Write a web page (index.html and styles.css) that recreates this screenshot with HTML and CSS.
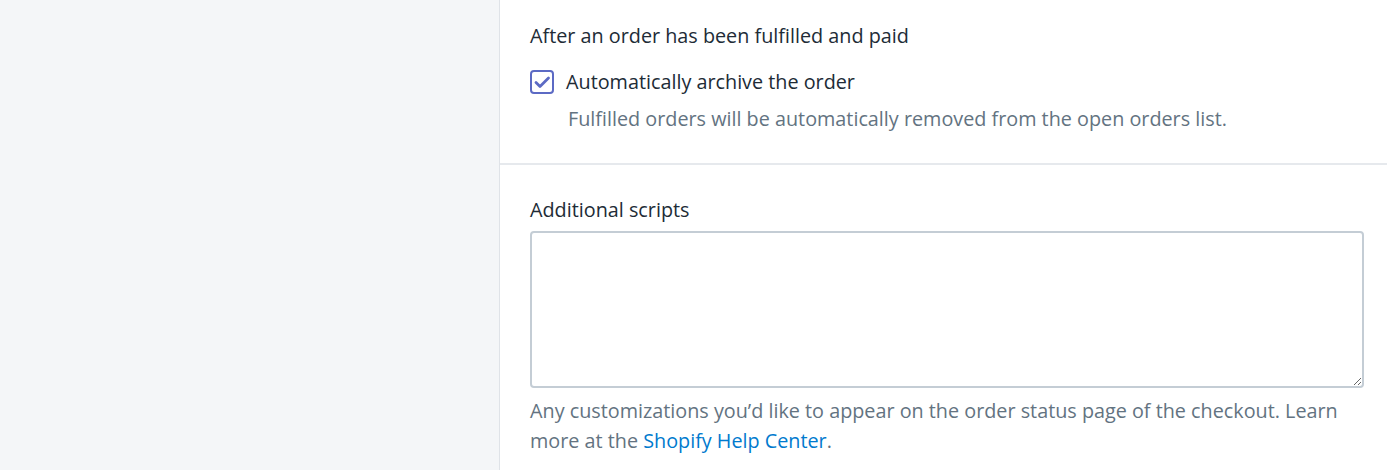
FILE: index.html
```html
<!DOCTYPE html>
<html lang="en">
<head>
<meta charset="utf-8">
<title>Order processing</title>
<link rel="stylesheet" href="styles.css">
</head>
<body>
<div class="page">
  <aside class="side"></aside>
  <main class="card">
    <section class="section first">
      <p class="heading">After an order has been fulfilled and paid</p>
      <label class="check-row">
        <span class="checkbox">
          <svg viewBox="0 0 20 20" width="20" height="20" aria-hidden="true"><path d="M4 10.5l4 4 8.5-8.5" fill="none" stroke="#5c6ac4" stroke-width="2.8" stroke-linecap="round" stroke-linejoin="round"/></svg>
        </span>
        <span class="check-label">Automatically archive the order</span>
      </label>
      <p class="check-help">Fulfilled orders will be automatically removed from the open orders list.</p>
    </section>
    <section class="section second">
      <label class="field-label" for="scripts">Additional scripts</label>
      <textarea id="scripts" class="textarea"></textarea>
      <p class="help">Any customizations you’d like to appear on the order status page of the checkout. Learn more at the <a href="#" class="link">Shopify Help Center</a>.</p>
    </section>
  </main>
</div>
</body>
</html>
```

FILE: styles.css
```css
* { box-sizing: border-box; }
html, body { margin: 0; padding: 0; }
body {
  font-family: "Open Sans", "Noto Sans", "Liberation Sans", sans-serif;
  font-size: 19.8px;
  line-height: 30px;
  color: #212b36;
  background: #ffffff;
}
.page {
  display: flex;
  height: 470px;
  overflow: hidden;
}
.side {
  width: 500px;
  flex: none;
  background: #f4f6f8;
  border-right: 1px solid #dfe3e8;
}
.card {
  flex: 1;
  background: #fff;
}
.section {
  padding: 0 23px 0 30px;
}
.first {
  padding-top: 21px;
  padding-bottom: 29px;
  border-bottom: 2px solid #e6e9ed;
}
.second {
  padding-top: 30px;
}
p { margin: 0; }
.heading { margin-bottom: 16px; }
.check-row {
  display: flex;
  align-items: center;
  gap: 12px;
  height: 30px;
}
.checkbox {
  width: 24px;
  height: 24px;
  border: 2px solid #5c6ac4;
  border-radius: 4px;
  display: flex;
  align-items: center;
  justify-content: center;
  flex: none;
}
.check-help {
  margin-top: 7px;
  margin-left: 38px;
  color: #637381;
}
.field-label {
  display: block;
  margin-bottom: 6px;
}
.textarea {
  display: block;
  width: 100%;
  height: 157px;
  border: 2px solid #c4cdd5;
  border-radius: 4px;
  background: #fff;
  font: inherit;
  resize: vertical;
  padding: 6px 10px;
}
.help {
  margin-top: 8px;
  color: #637381;
}
.link {
  color: #007ace;
  text-decoration: none;
}
```
